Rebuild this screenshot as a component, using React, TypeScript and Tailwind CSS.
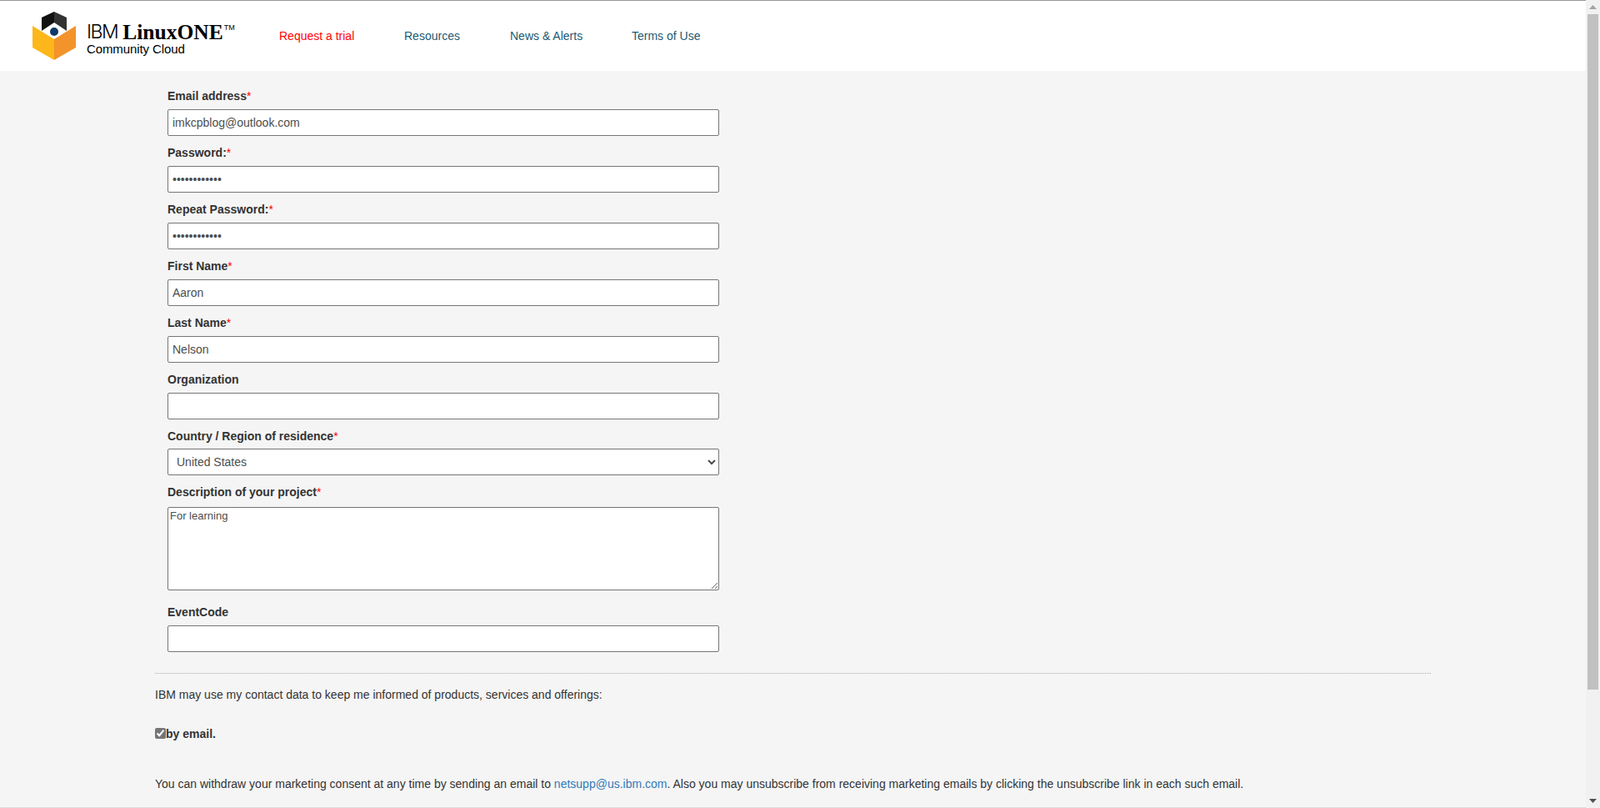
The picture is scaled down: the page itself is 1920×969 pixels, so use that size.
import React from "react";

const fieldClass =
  "block w-[662px] h-8 px-[5px] bg-white border border-[#767676] rounded-[2px] text-[14px] text-[#4d4d4d] outline-none";

const Label = ({ text, required, gap }: { text: string; required?: boolean; gap?: string }) => (
  <label className={`block h-5 leading-5 text-[14px] font-bold text-[#333] ${gap || "mb-[6px]"}`}>
    {text}
    {required && <span className="font-normal text-[#f00]">*</span>}
  </label>
);

const Field = ({
  label,
  value,
  type,
  required,
}: {
  label: string;
  value: string;
  type?: string;
  required?: boolean;
}) => (
  <div className="mb-[10px]">
    <Label text={label} required={required} />
    <input type={type || "text"} readOnly value={value} className={fieldClass} />
  </div>
);

const Logo = () => (
  <div className="flex items-center w-[246px]">
    <svg width="52" height="58" viewBox="0 0 52 58" className="mr-[13px] shrink-0">
      <polygon points="0,17 26,33 26,58 0,43" fill="#fdb71a" />
      <polygon points="52,17 26,33 26,58 52,43" fill="#f3932b" />
      <polygon points="11,7 26,0 26,13 11,23" fill="#111" />
      <polygon points="41,7 26,0 26,13 41,23" fill="#333" />
      <circle cx="26" cy="24" r="5" fill="#0f3a68" />
    </svg>
    <div className="text-black mt-[5px] whitespace-nowrap">
      <div className="flex items-start h-[27px] leading-[29px]">
        <span className="text-[23px] font-light tracking-[-1.5px] mr-[6px] font-['Inter',sans-serif]">IBM</span>
        <span className="text-[25.5px] font-bold font-['Liberation_Serif',serif]">LinuxONE</span>
        <span className="text-[9px] leading-[18px] ml-[1px]">TM</span>
      </div>
      <div className="text-[15px] leading-[16px] tracking-[-0.1px]">Community Cloud</div>
    </div>
  </div>
);

const navLinks = [
  { text: "Request a trial", cls: "w-[150px] text-[#f00]" },
  { text: "Resources", cls: "w-[127px] text-[#1c5a73]" },
  { text: "News & Alerts", cls: "w-[146px] text-[#1c5a73]" },
  { text: "Terms of Use", cls: "text-[#1c5a73]" },
];

export default function App() {
  return (
    <div className="flex h-[969px] w-full overflow-hidden bg-[#f5f5f5] font-['Liberation_Sans',Arial,sans-serif]">
      <div className="flex-1 min-w-0 flex flex-col">
        <header className="h-[85px] shrink-0 bg-white border-t border-[#999] flex items-center pl-[39px]">
          <Logo />
          <nav className="flex ml-[50px] text-[14px] mt-[1px]">
            {navLinks.map((l) => (
              <a key={l.text} className={l.cls}>
                {l.text}
              </a>
            ))}
          </nav>
        </header>

        <main className="flex-1 min-h-0 pl-[186px] pr-[186px] pt-[20px] border-b border-[#ddd]">
          <div className="pl-[15px]">
            <Field label="Email address" value="imkcpblog@outlook.com" required />
            <Field label="Password:" value="Passw0rd1234" type="password" required />
            <Field label="Repeat Password:" value="Passw0rd1234" type="password" required />
            <Field label="First Name" value="Aaron" required />
            <Field label="Last Name" value="Nelson" required />
            <Field label="Organization" value="" />
            <div className="mb-[10px]">
              <Label text="Country / Region of residence" required gap="mb-[5px]" />
              <select className="block w-[662px] h-8 pl-[6px] pr-[5px] bg-white border border-[#767676] rounded-[2px] text-[14px] text-[#4d4d4d] outline-none">
                <option>United States</option>
              </select>
            </div>
            <div className="mb-[16px]">
              <Label text="Description of your project" required gap="mb-[8px]" />
              <textarea
                readOnly
                value="For learning"
                className="block w-[662px] h-[100px] px-[2px] py-[2px] bg-white border border-[#767676] rounded-[2px] text-[13px] leading-[15px] text-[#4d4d4d] outline-none"
              />
            </div>
            <Field label="EventCode" value="" />
          </div>

          <hr className="mt-[25px] border-0 border-t border-dotted border-[#aaa]" />

          <p className="mt-[15px] h-5 leading-5 text-[14px] text-[#333]">
            IBM may use my contact data to keep me informed of products, services and offerings:
          </p>

          <div className="mt-[27px] h-5 flex items-center text-[14px] font-bold text-[#333]">
            <input type="checkbox" checked readOnly className="w-[13px] h-[13px] m-0 accent-[#767676] -translate-y-[1px]" />
            by email.
          </div>

          <p className="mt-[40px] h-5 leading-5 text-[14px] text-[#333]">
            You can withdraw your marketing consent at any time by sending an email to{" "}
            <a className="text-[#337ab7]">netsupp@us.ibm.com</a>. Also you may unsubscribe from receiving marketing
            emails by clicking the unsubscribe link in each such email.
          </p>
        </main>
      </div>

      <div className="w-[17px] shrink-0 flex flex-col items-center bg-[#f1f1f1]">
        <div className="h-[17px] flex items-center justify-center">
          <svg width="9" height="5" viewBox="0 0 9 5">
            <polygon points="4.5,0 9,5 0,5" fill="#a3a3a3" />
          </svg>
        </div>
        <div className="w-[13px] h-[810px] bg-[#c1c1c1]" />
        <div className="flex-1" />
        <div className="h-[17px] flex items-center justify-center">
          <svg width="9" height="5" viewBox="0 0 9 5">
            <polygon points="0,0 9,0 4.5,5" fill="#505050" />
          </svg>
        </div>
      </div>
    </div>
  );
}
